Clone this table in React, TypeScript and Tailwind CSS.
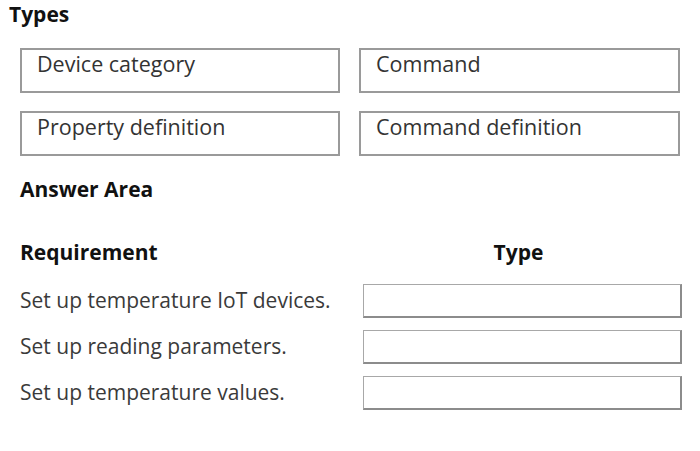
const types = [
  ["Device category", "Command"],
  ["Property definition", "Command definition"],
];

const requirements = [
  "Set up temperature IoT devices.",
  "Set up reading parameters.",
  "Set up temperature values.",
];

export default function App() {
  return (
    <div
      className="w-[700px] h-[451px] bg-white text-[#2b2b2b] overflow-hidden"
      style={{ fontFamily: '"Open Sans", "Noto Sans", sans-serif' }}
    >
      <div className="pt-[2px] pl-[9px] text-[21px] leading-[24px] font-bold text-[#111]">Types</div>

      {/* Draggable types */}
      <div className="mt-[22px] ml-[20px] w-[660px] grid grid-cols-[320px_321px] gap-x-[19px] gap-y-[18px]">
        {types.flat().map((t) => (
          <div
            key={t}
            className="h-[45px] border-2 border-[#9a9a9a] pl-[15px] pt-[1px] text-[21.5px] leading-[26px] text-[#333]"
          >
            {t}
          </div>
        ))}
      </div>

      <div className="mt-[21px] ml-[20px] text-[21px] leading-[24px] font-bold text-[#111]">Answer Area</div>

      {/* Answer table */}
      <div className="mt-[39px] ml-[20px] w-[662px] grid grid-cols-[343px_319px]">
        <div className="text-[21px] leading-[24px] font-bold text-[#111]">Requirement</div>
        <div className="text-[21px] leading-[24px] font-bold text-[#111] text-center pr-[8px]">Type</div>
        <div className="col-span-2 h-[20px]" />
        {requirements.map((r) => (
          <div key={r} className="contents">
            <div className="h-[46px] text-[21px] leading-[33px] text-[#3a3a3a]">{r}</div>
            <div className="h-[46px]">
              <div className="h-[34px] border border-[#a8a8a8] border-b-2 border-r-2 border-b-[#8c8c8c] border-r-[#8c8c8c] bg-white" />
            </div>
          </div>
        ))}
      </div>
    </div>
  );
}
